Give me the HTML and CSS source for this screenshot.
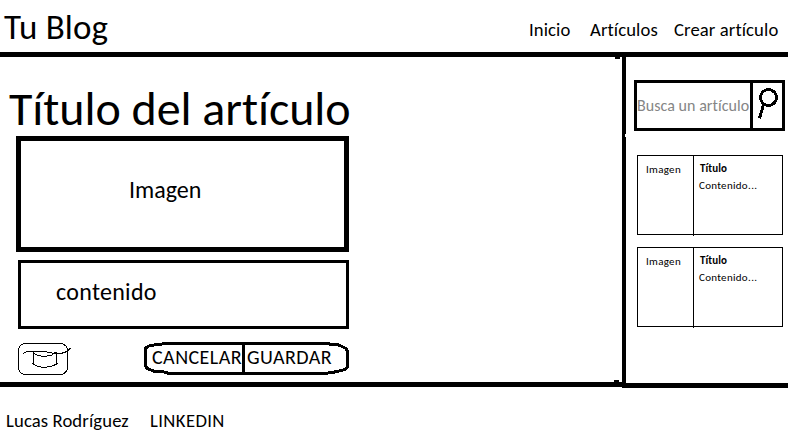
FILE: index.html
```html
<!DOCTYPE html>
<html lang="es">
<head>
<meta charset="utf-8">
<title>Tu Blog</title>
<link rel="stylesheet" href="styles.css">
</head>
<body>
<header class="header">
  <div class="brand">Tu Blog</div>
  <nav class="nav"><a class="n1">Inicio</a><a class="n2">Artículos</a><a class="n3">Crear artículo</a></nav>
</header>
<div class="page">
  <main class="main">
    <h1 class="title">Título del artículo</h1>
    <div class="image-box"><span>Imagen</span></div>
    <div class="content-box"><span>contenido</span></div>
    <div class="actions">
      <svg class="trash" width="56" height="34" viewBox="0 0 56 34" fill="none" stroke="#000" shape-rendering="crispEdges">
        <rect x=".5" y="2.5" width="49" height="31" rx="7"/>
        <path d="M5 12.5L9 10.5H27L36 12.5H43L49 10.500L52.500 7M15.500 10.500V23M38.500 11V23M15 12L20 14.500L26 15.500L33 14.500L38 11M14 22.500L20 25.500L26 26.500L33 25.500L40 22.500"/>
      </svg>
      <div class="buttons">
        <svg class="outline" width="206" height="34" viewBox="0 0 206 34" fill="none" stroke="#000" stroke-width="3" shape-rendering="crispEdges">
          <path d="M22 2.500H184L187 3.500H193L197 5L202 7.500L203.500 10V26L201 28.500L193 30.500L188 31.500L180 32.500H25L20 31L11 30.500L3 27.500L1.500 25V7L6 4.500L14 3.500L22 2.500M99.500 2V32"/>
        </svg>
        <span class="cancel">CANCELAR</span><span class="save">GUARDAR</span>
      </div>
    </div>
  </main>
  <aside class="side">
    <div class="search">
      <span class="hint">Busca un artículo</span>
      <svg class="lens" width="29" height="45" viewBox="0 0 29 45" fill="none" stroke="#000" stroke-width="3" shape-rendering="crispEdges">
        <circle cx="15.500" cy="14.500" r="8"/><path d="M10.500 21.500L9 27L7.500 32L6.500 35.500"/>
      </svg>
    </div>
    <article class="card"><div class="thumb">Imagen</div><div class="text"><b>Título</b><p>Contenido<i>...</i></p></div></article>
    <article class="card"><div class="thumb">Imagen</div><div class="text"><b>Título</b><p>Contenido<i>...</i></p></div></article>
  </aside>
</div>
<footer class="footer"><span class="author">Lucas Rodríguez</span><span class="link">LINKEDIN</span></footer>
<svg class="joints" width="14" height="330" viewBox="0 0 14 330" shape-rendering="crispEdges"><path d="M1 1h5v2h-5zM0 324h5v2h-5z"/><path fill="#fff" d="M11 78h1v3h-1z"/></svg>
</body>
</html>
```
FILE: styles.css
```css
* { box-sizing: border-box; }
body { position: relative; margin: 0; width: 788px; height: 446px; overflow: hidden; background: #fff; color: #000; font-family: Calibri, Carlito, Lato, sans-serif; font-variant-ligatures: none; white-space: nowrap; }
.header { height: 57px; border-bottom: 5px solid #000; display: flex; justify-content: space-between; }
.brand { padding: 7px 0 0 4px; font-size: 35px; line-height: 40px; letter-spacing: .15px; }
.nav { display: flex; padding-top: 18px; font-size: 18.67px; line-height: 24px; letter-spacing: .1px; }
.nav a { flex: none; }
.n1 { width: 61px; }
.n2 { width: 84px; }
.n3 { width: 114px; }
.page { display: flex; height: 331px; }
.main { width: 622px; height: 330px; border-bottom: 5px solid #000; padding: 25px 0 0 16px; }
.title { margin: 0 0 0 -7px; height: 54px; font-size: 48px; line-height: 54px; font-weight: 400; letter-spacing: -.05px; }
.image-box { width: 333px; height: 116px; border: 5px solid #000; padding: 35px 0 0 108px; font-size: 24px; line-height: 28px; }
.content-box { width: 331px; height: 69px; margin: 8px 0 0 2px; border: 3px solid #000; padding: 15px 0 0 35px; font-size: 24px; line-height: 28px; letter-spacing: .3px; }
.actions { display: flex; margin: 12px 0 0 2px; }
.trash { margin-right: 70px; }
.buttons { position: relative; display: flex; width: 206px; height: 34px; font-size: 20px; line-height: 32px; letter-spacing: .45px; }
.outline { position: absolute; left: 0; top: 0; }
.cancel { width: 103px; padding-left: 8px; }
.side { width: 166px; height: 331px; border-left: 4px solid #000; border-bottom: 5px solid #000; padding: 23px 0 0 8px; }
.search { display: flex; width: 151px; height: 51px; border: 3px solid #000; }
.hint { width: 116px; border-right: 3px solid #000; color: #858585; font-size: 16px; line-height: 46px; letter-spacing: .05px; }
.card { display: flex; width: 146px; height: 80px; margin: 24px 0 0 3px; border: 1px solid #000; font-size: 11px; line-height: 16px; letter-spacing: .3px; }
.card + .card { margin-top: 12px; }
.thumb { width: 56px; height: 80px; border-right: 1px solid #000; padding: 6px 0 0 8px; }
.text { padding: 5px 0 0 5px; }
.text b { display: block; padding-left: 1px; letter-spacing: .1px; }
.text p { margin: 0; padding-top: 1px; }
.text i { font-style: normal; letter-spacing: .4px; }
.footer { display: flex; padding: 21px 0 0 6px; font-size: 18.67px; line-height: 24px; letter-spacing: .12px; }
.author { width: 144px; }
.link { letter-spacing: .4px; }
.joints { position: absolute; left: 614px; top: 56px; }
```
